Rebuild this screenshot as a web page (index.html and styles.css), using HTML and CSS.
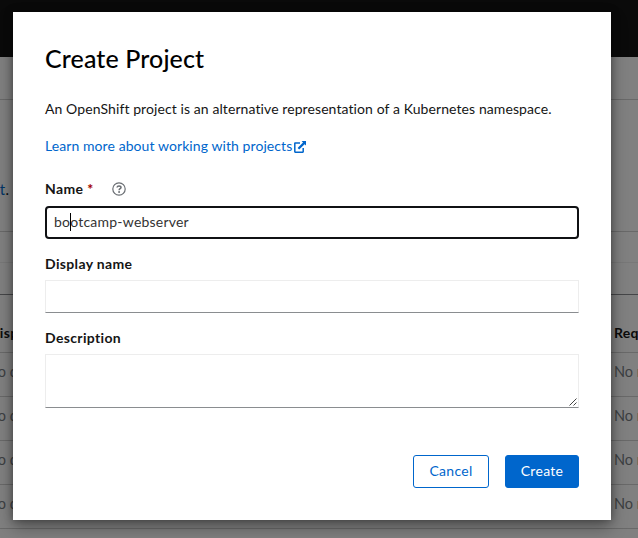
FILE: index.html
```html
<!DOCTYPE html>
<html lang="en">
<head>
<meta charset="utf-8">
<title>Create Project</title>
<link rel="stylesheet" href="styles.css">
</head>
<body>
<div class="page">
  <div class="masthead"></div>
  <div class="toolbar"></div>
  <div class="intro"><span class="intro-link">ct</span>.</div>
  <div class="tabs"></div>
  <div class="filters"></div>
  <div class="row row-head"><span>Display name</span><span>Requester</span></div>
  <div class="row"><span>No display name</span><span>No requester</span></div>
  <div class="row"><span>No display name</span><span>No requester</span></div>
  <div class="row"><span>No display name</span><span>No requester</span></div>
  <div class="row"><span>No display name</span><span>No requester</span></div>
</div>
<div class="modal" role="dialog">
  <h1><span>Create Project</span></h1>
  <p class="lead"><span>An OpenShift project is an alternative representation of a Kubernetes namespace.</span></p>
  <a class="learn"><span>Learn more about working with projects</span><svg class="ext" viewBox="0 0 12 12"><path d="M6 2H1.2Q.8 2 .8 2.4V10.8Q.8 11.2 1.2 11.2H8.8Q9.2 11.2 9.2 10.8V7" fill="none" stroke="currentColor" stroke-width="1.5"/><path d="M7.6 0H12V4.4L10.6 3.2L5.2 8.6L3.6 7L9 1.6Z" fill="currentColor"/></svg></a>
  <div class="label label-name"><span>Name</span><b class="req">*</b><svg class="help" viewBox="0 0 14 14"><circle cx="7" cy="7" r="6.2" fill="none" stroke="currentColor" stroke-width="1.2"/><path d="M5 5.5C5.2 4.3 6 3.9 7 3.9C8.2 3.9 9 4.5 9 5.4C9 6.7 7.1 6.6 7.1 8.2" fill="none" stroke="currentColor" stroke-width="1.5"/><circle cx="7.1" cy="10" r=".95" fill="currentColor"/></svg></div>
  <div class="field focused"><span class="typed">bootcamp-webserver</span><i class="caret"></i></div>
  <div class="label label-display"><span>Display name</span></div>
  <div class="field"></div>
  <div class="label label-desc"><span>Description</span></div>
  <div class="field area"><svg class="grip" viewBox="0 0 8 8"><path d="M.5 7.5L7.5.5M4.5 7.5L7.5 4.5" fill="none" stroke="#444" stroke-width="1"/></svg></div>
  <div class="actions"><div class="btn cancel"><span>Cancel</span></div><div class="btn create"><span>Create</span></div></div>
</div>
</body>
</html>
```
FILE: styles.css
```css
* { box-sizing: border-box; }
body {
  margin: 0;
  width: 638px;
  height: 538px;
  overflow: hidden;
  position: relative;
  background: #808080;
  font: 14px/21px Lato, "Open Sans", sans-serif;
  color: #151515;
}
.page { height: 538px; overflow: hidden; }
.masthead { height: 57px; background: #0a0a0a; }
.toolbar { height: 43px; border-bottom: 1px solid #696969; }
.intro { height: 132px; padding-top: 79px; border-bottom: 1px solid #696969; margin-left: -8px; color: #0b0b0b; font-size: 15px; letter-spacing: .5px; }
.intro-link { color: #003466; }
.tabs { height: 31px; border-bottom: 1px solid #787878; }
.filters { height: 32px; border-bottom: 1px solid #454648; }
.row {
  height: 44px;
  display: grid;
  grid-template-columns: 627px 120px;
  margin-left: -13px;
  padding-top: 8px;
  border-bottom: 1px solid #696969;
  color: #3c3f42;
  white-space: nowrap;
  font-size: 14.5px;
}
.row-head { height: 58px; padding-top: 27px; margin-left: -11px; grid-template-columns: 625px 120px; font-weight: 700; color: #0b0b0b; font-size: 14px; letter-spacing: .3px; }
.modal {
  position: absolute;
  left: 13px;
  top: 12px;
  width: 598px;
  height: 508px;
  padding: 31px 32px;
  background: #fff;
  box-shadow: 0 8px 16px rgba(3,3,3,.32), 0 0 8px rgba(3,3,3,.36);
}
h1 { margin: 0; height: 31px; font: 500 25px/31px Lato, sans-serif; letter-spacing: .12px; white-space: nowrap; color: #000; }
.lead { margin: 24px 0 0; height: 21px; white-space: nowrap; letter-spacing: .09px; }
.learn { display: flex; align-items: center; height: 21px; margin-top: 16px; color: #06c; letter-spacing: .08px; }
.ext { width: 12px; height: 12px; margin-left: 2px; margin-top: 2px; }
.label { display: flex; height: 21px; font-weight: 700; white-space: nowrap; letter-spacing: .35px; }
.label-name { margin-top: 22px; }
.label-display { margin-top: 14px; }
.label-desc { margin-top: 14px; }
.req { color: #a30000; margin-left: 4px; letter-spacing: 0; }
.help { width: 14px; height: 14px; margin: 4px 0 0 19px; color: #6a6e73; }
.field { height: 33px; margin-top: 6px; border: 1px solid #ededed; border-bottom-color: #8a8d90; }
.focused { position: relative; margin-top: 7px; padding: 3px 7px; border: 2px solid #101114; border-radius: 4px; color: #333; letter-spacing: .22px; }
.caret { position: absolute; left: 23px; top: 5px; width: 1px; height: 18px; background: #000; }
.area { height: 54px; display: flex; align-items: flex-end; justify-content: flex-end; padding: 1px; }
.grip { width: 8px; height: 8px; }
.actions { display: flex; justify-content: flex-end; gap: 16px; margin-top: 47px; }
.btn { height: 33px; line-height: 30px; border: 1px solid #06c; border-radius: 3px; text-align: center; color: #06c; letter-spacing: .3px; }
.cancel { width: 76px; }
.create { width: 74px; background: #06c; color: #fff; }
```
